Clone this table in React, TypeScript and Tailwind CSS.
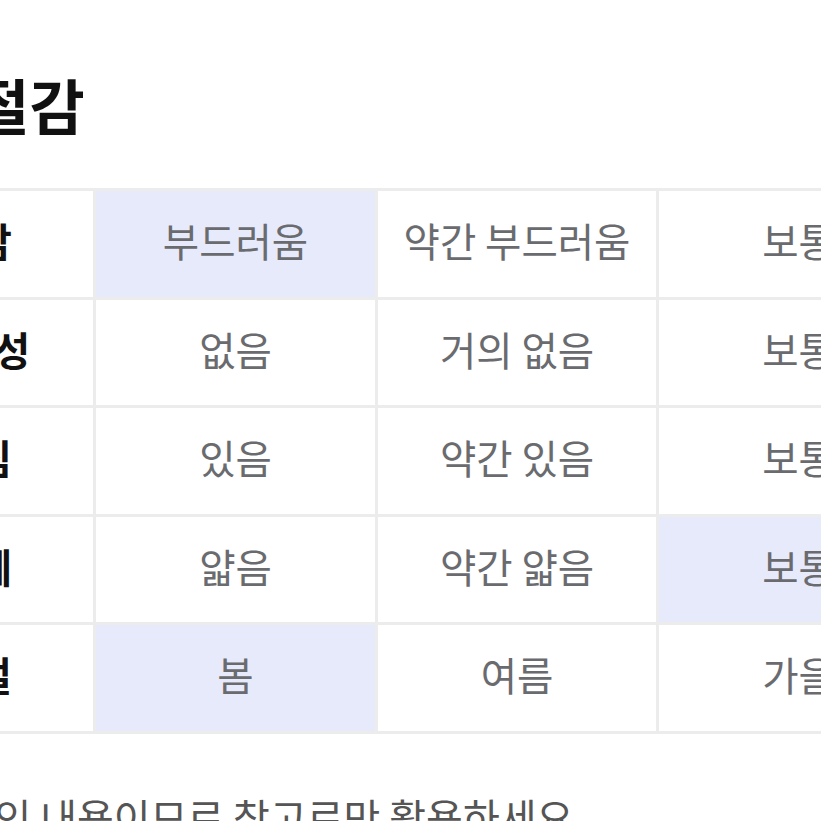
import React from 'react';

type Cell = { text: string; on?: boolean };

const ROWS: { label: string; cells: Cell[] }[] = [
  {
    label: '촉감',
    cells: [{ text: '부드러움', on: true }, { text: '약간 부드러움' }, { text: '보통' }, { text: '약간 거침' }],
  },
  {
    label: '신축성',
    cells: [{ text: '없음' }, { text: '거의 없음' }, { text: '보통' }, { text: '좋음' }],
  },
  {
    label: '비침',
    cells: [{ text: '있음' }, { text: '약간 있음' }, { text: '보통' }, { text: '없음' }],
  },
  {
    label: '두께',
    cells: [{ text: '얇음' }, { text: '약간 얇음' }, { text: '보통', on: true }, { text: '두꺼움' }],
  },
  {
    label: '계절',
    cells: [{ text: '봄', on: true }, { text: '여름' }, { text: '가을' }, { text: '겨울' }],
  },
];

export default function App() {
  return (
    <div
      className="w-[821px] h-[821px] overflow-hidden bg-white"
      style={{ fontFamily: '"Noto Sans CJK KR", "Noto Sans", sans-serif' }}
    >
      <div className="ml-[-145px] w-[1400px]">
        {/* section title */}
        <h2 className="pl-[64px] pt-[72px] text-[60px] leading-[64px] font-bold text-[#111]">계절감</h2>

        {/* fabric table */}
        <div className="mt-[52px] grid w-max grid-cols-[235px_279px_278px_279px_279px] gap-[3px] bg-[#ececec] p-[3px]">
          {ROWS.map(row => (
            <React.Fragment key={row.label}>
              <div className="flex h-[105.5px] items-center justify-center bg-white pb-[8px] text-[39.5px] font-bold text-[#111]">
                {row.label}
              </div>
              {row.cells.map((c, i) => (
                <div
                  key={i}
                  className={`flex h-[105.5px] items-center justify-center pb-[8px] text-[39.5px] text-[#6a6b6f] ${
                    c.on ? 'bg-[#e7eafb]' : 'bg-white'
                  }`}
                >
                  {c.text}
                </div>
              ))}
            </React.Fragment>
          ))}
        </div>

        <p className="mt-[58px] pl-[29px] text-[40px] leading-[48px] text-[#555]">
          주관적인 내용이므로 참고로만 활용하세요.
        </p>
      </div>
    </div>
  );
}
